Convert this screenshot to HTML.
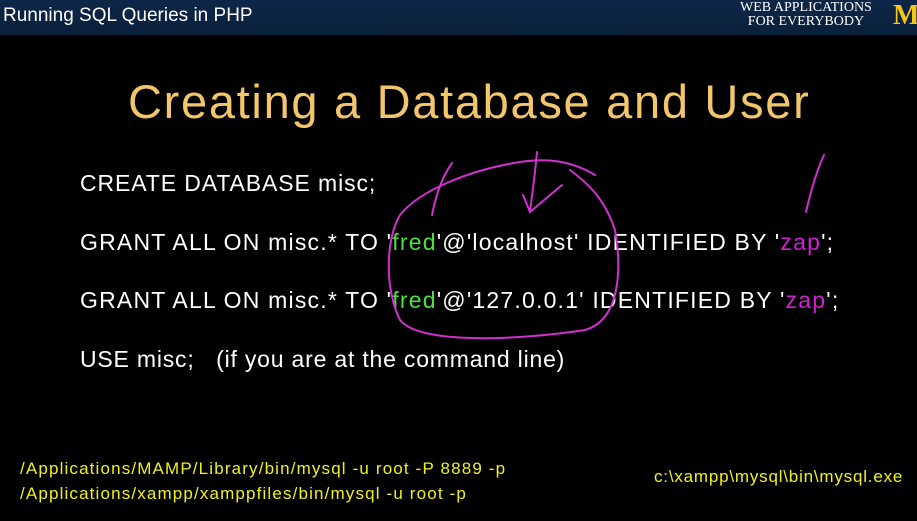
<!DOCTYPE html>
<html><head><style>
body{margin:0;width:917px;height:521px;background:#000;overflow:hidden;position:relative;font-family:"Liberation Sans",sans-serif}
.hdr{position:absolute;left:0;top:0;width:917px;height:35px;background:linear-gradient(#0d2748,#0a1f3a)}
.t{position:absolute;white-space:nowrap}
.b{color:#fff;font-size:23px;letter-spacing:1.2px}
</style></head><body>
<div class="hdr"></div>
<div class="t" style="left:3px;top:5px;color:#fff;font-size:19px">Running SQL Queries in PHP</div>
<div class="t" style="left:740px;top:1px;color:#fff;font-family:'Liberation Serif',serif;font-size:14px;line-height:14px;text-align:center">WEB APPLICATIONS<br>FOR EVERYBODY</div>
<div class="t" style="left:893px;top:2px;color:#f5c518;font-family:'Liberation Serif',serif;font-weight:bold;font-size:28px;line-height:28px">M</div>
<div class="t" style="left:128px;top:74px;color:#f3c66a;font-size:47px;letter-spacing:1.7px">Creating a Database and User</div>
<div class="t b" style="left:80px;top:170px;letter-spacing:0.9px">CREATE DATABASE misc;</div>
<div class="t b" style="left:80px;top:229px">GRANT ALL ON misc.* TO '<span style="color:#4ce03c">fred</span>'@'localhost' IDENTIFIED BY '<span style="color:#d020d0">zap</span>';</div>
<div class="t b" style="left:80px;top:287px">GRANT ALL ON misc.* TO '<span style="color:#4ce03c">fred</span>'@'127.0.0.1' IDENTIFIED BY '<span style="color:#d020d0">zap</span>';</div>
<div class="t b" style="left:80px;top:346px;letter-spacing:0.8px">USE misc; &nbsp;&nbsp;(if you are at the command line)</div>
<div class="t" style="left:20px;top:456px;color:#f0f020;font-size:17px;line-height:25px;letter-spacing:1.15px">/Applications/MAMP/Library/bin/mysql -u root -P 8889 -p<br>/Applications/xampp/xamppfiles/bin/mysql -u root -p</div>
<div class="t" style="left:654px;top:467px;color:#f0f020;font-size:17px;letter-spacing:0.8px">c:\xampp\mysql\bin\mysql.exe</div>
<svg width="917" height="521" style="position:absolute;left:0;top:0" fill="none" stroke="#d030d0" stroke-width="2" stroke-linecap="round">
<path d="M595,175 C570,160 545,158 520,162 C470,170 420,190 400,215 C385,240 385,290 400,320 C420,345 520,340 585,330 C620,320 622,270 615,230 C605,200 590,185 570,170"/>
<path d="M452,163 C440,180 435,200 432,215"/>
<path d="M537,152 C535,175 532,195 530,212 M523,195 L530,212 L562,185"/>
<path d="M824,155 C815,175 810,195 806,212"/>
</svg>
</body></html>
